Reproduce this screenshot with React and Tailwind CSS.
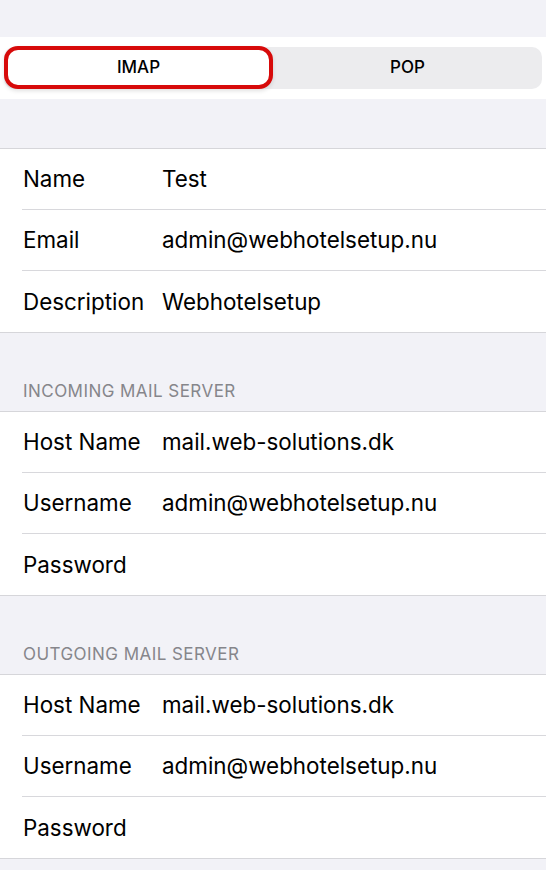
const fields = [
  { label: 'Name', value: 'Test' },
  { label: 'Email', value: 'admin@webhotelsetup.nu' },
  { label: 'Description', value: 'Webhotelsetup' },
];

const incoming = [
  { label: 'Host Name', value: 'mail.web-solutions.dk' },
  { label: 'Username', value: 'admin@webhotelsetup.nu' },
  { label: 'Password', value: '' },
];

const outgoing = [
  { label: 'Host Name', value: 'mail.web-solutions.dk' },
  { label: 'Username', value: 'admin@webhotelsetup.nu' },
  { label: 'Password', value: '' },
];

function Section({ rows }) {
  return (
    <div className="bg-white border-y border-[#d6d6da]">
      {rows.map((row, i) => (
        <div key={row.label} className="pl-[22px]">
          <div
            className={
              'h-[61px] flex items-center text-[22.4px] text-black ' +
              (i < rows.length - 1 ? 'border-b border-[#d8d8dc]' : '')
            }
          >
            <span className="w-[140px] pl-[1px] shrink-0">{row.label}</span>
            <span>{row.value}</span>
          </div>
        </div>
      ))}
    </div>
  );
}

function Header({ title }) {
  return (
    <div className="h-[78px] flex items-end pb-[7px] pl-[23px] text-[17px] text-[#86868b] tracking-[0.45px]">
      {title}
    </div>
  );
}

export default function App() {
  return (
    <div
      className="min-h-[870px] bg-[#f2f2f7]"
      style={{ fontFamily: 'Inter, "Noto Sans", sans-serif' }}
    >
      <div className="h-[37px]" />
      <div className="bg-white h-[62px] px-[4px] flex items-center">
        <div className="flex-1 h-[42px] rounded-[10px] bg-[#ececee] flex">
          <div className="w-[269px] h-[43px] -mt-[1px] rounded-[14px] bg-white border-[4px] border-[#d70a0a] shadow-[0_2px_4px_rgba(0,0,0,0.12)] flex items-center justify-center text-[17px] font-medium text-black">
            IMAP
          </div>
          <div className="flex-1 flex items-center justify-center text-[17px] font-medium text-black">
            POP
          </div>
        </div>
      </div>
      <div className="h-[49px]" />
      <Section rows={fields} />
      <Header title="INCOMING MAIL SERVER" />
      <Section rows={incoming} />
      <Header title="OUTGOING MAIL SERVER" />
      <Section rows={outgoing} />
    </div>
  );
}
